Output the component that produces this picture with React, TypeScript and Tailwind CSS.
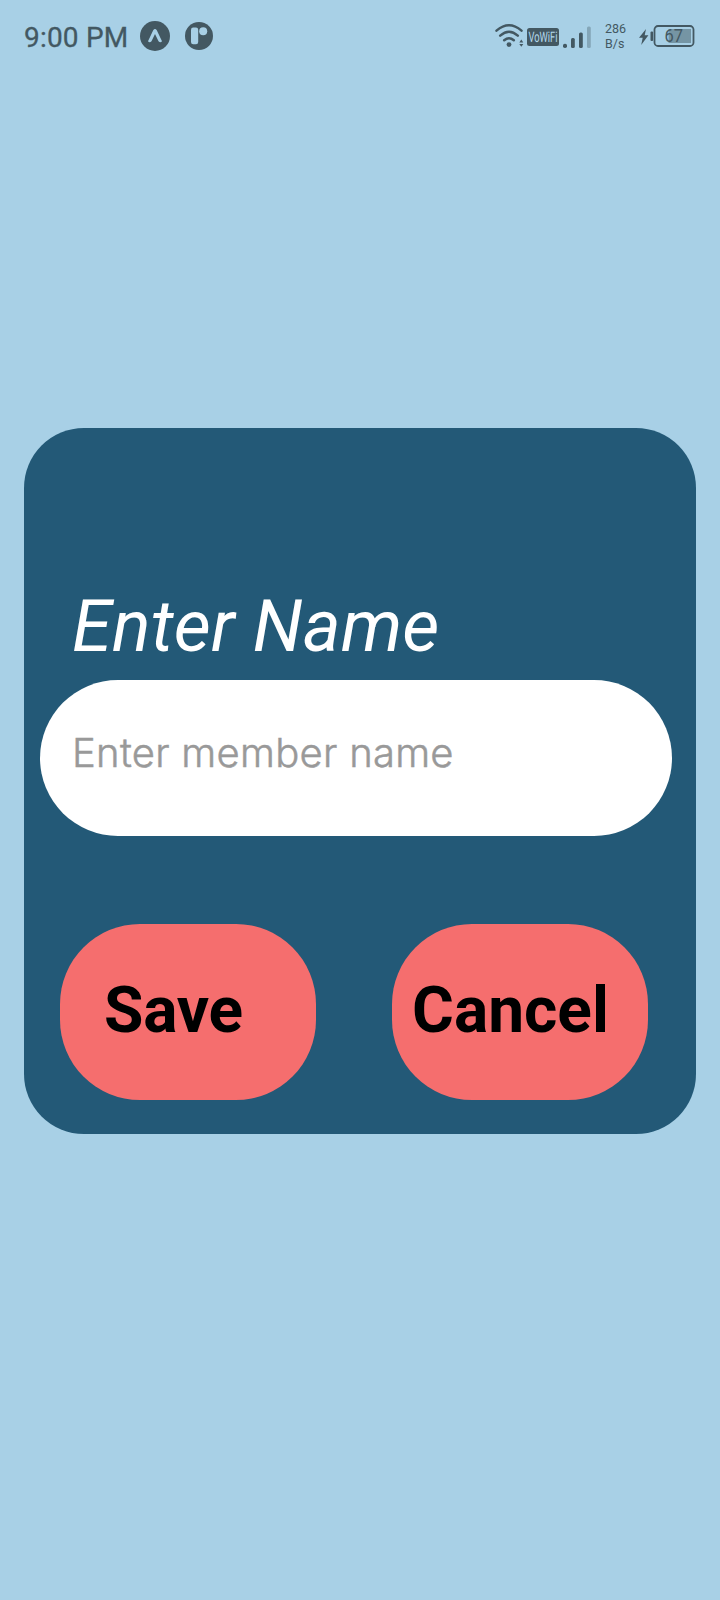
import React from "react";

function ExpoIcon() {
  return (
    <svg className="h-[30px] w-[30px]" viewBox="0 0 30 30">
      <circle cx="15" cy="15" r="15" fill="#435862" />
      <path d="M8 20.200 13.200 9.200q1.800-2.400 3.600 0L22 20.200q-1.600 2.200-3.500 0L15 13l-3.500 7.200q-1.900 2.200-3.500 0Z" fill="#a8d0e6" />
    </svg>
  );
}

function RoundBadgeIcon() {
  return (
    <svg className="h-7 w-7" viewBox="0 0 28 28">
      <circle cx="14" cy="14" r="14" fill="#435862" />
      <rect x="6" y="5.500" width="7.200" height="16.700" rx="2.200" fill="#a8d0e6" />
      <circle cx="18.200" cy="9.300" r="4" fill="#a8d0e6" />
    </svg>
  );
}

function WifiIcon() {
  return (
    <svg className="h-6 w-[29px]" viewBox="0 0 29 24" fill="none" stroke="#435862" strokeWidth="2.5" strokeLinecap="round">
      <path d="M1.500 6.600Q14-4 26.500 6.600M5.200 11.600q8.800-7.800 17.600 0M9.200 16.200q4.800-4 9.600 0" />
      <circle cx="14" cy="20.600" r="2.400" fill="#435862" stroke="none" />
      <path d="M24.300 18.500h4L26.300 15.500ZM24.300 20h4l-2 2.800Z" fill="#435862" stroke="none" />
    </svg>
  );
}

function VoWifiBadge() {
  return (
    <svg className="h-[18px] w-8 overflow-visible" viewBox="0 0 32 18">
      <rect width="32" height="18" rx="2.500" fill="#435862" />
      <text x="1.500" y="14.200" fontFamily="Roboto, sans-serif" fontSize="14.500" fill="#b4d9ec" textLength="29" lengthAdjust="spacingAndGlyphs" textRendering="geometricPrecision">VoWiFi</text>
    </svg>
  );
}

function SignalIcon() {
  return (
    <svg className="h-[23px] w-7" viewBox="0 0 28 23" fill="#435862">
      <rect x="0" y="18.700" width="4" height="4.300" rx="1.800" />
      <rect x="8" y="13" width="3.800" height="10" rx="1.500" />
      <rect x="16" y="7.500" width="3.800" height="15.500" rx="1.500" />
      <rect x="24" y="1.500" width="3.800" height="21.500" rx="1.500" opacity=".35" />
    </svg>
  );
}

function BatteryIcon() {
  return (
    <svg className="h-6 w-[56px]" viewBox="0 0 56 24">
      <path d="M7 5 0 13.700h3.700L2.200 21 9.400 11.300H5.700Z" fill="#435862" />
      <rect x="11.500" y="7.500" width="2.600" height="9.500" rx="1" fill="#435862" />
      <rect x="15.500" y="2" width="39" height="20" rx="3.500" fill="none" stroke="#435862" strokeWidth="1.800" />
      <rect x="29.500" y="5" width="22.500" height="14" fill="#7595a4" />
      <text x="25.500" y="18.300" fontFamily="Roboto, sans-serif" fontSize="17.500" fill="#435862" textLength="18.500" lengthAdjust="spacingAndGlyphs">67</text>
    </svg>
  );
}

export default function App() {
  return (
    <div className="flex h-[1600px] w-[720px] flex-col overflow-hidden bg-[#a8d0e6] font-['Roboto',sans-serif]">
      <header className="flex h-[72px] shrink-0 items-center pl-6 pr-[25px] text-[#435862]">
        <span className="w-[116px] whitespace-nowrap pt-1 text-[28px]/[32px] tracking-[0.2px] [-webkit-text-stroke:0.3px_#435862]">9:00 PM</span>
        <ExpoIcon />
        <span className="ml-[15px]"><RoundBadgeIcon /></span>
        <div className="ml-auto flex items-center">
          <WifiIcon />
          <span className="ml-[3px] pt-0.5"><VoWifiBadge /></span>
          <span className="ml-1"><SignalIcon /></span>
          <span className="ml-3.5 w-[34px] text-[12.5px]/[15px]">286<br />B/s</span>
          <BatteryIcon />
        </div>
      </header>

      <main className="mx-6 mt-[356px] h-[706px] shrink-0 rounded-[60px] bg-[#235977] pl-4 pr-6 pt-[157px]">
        <label htmlFor="member" className="block pl-8 text-[72px]/[84px] italic tracking-[0.2px] text-white">Enter Name</label>
        <input
          id="member"
          placeholder="Enter member name"
          className="mt-[11px] block h-[156px] w-full rounded-[80px] bg-white pb-[60px] pl-8 pt-12 font-['Inter',sans-serif] text-[40px]/[48px] font-light tracking-[0.27px] text-black outline-none placeholder:text-[#999999] placeholder:opacity-100 placeholder:[-webkit-text-stroke:0.5px_#999999]"
        />
        <div className="mt-[88px] flex justify-between pl-5 pr-6">
          <button className="flex h-44 w-64 items-start rounded-[80px] bg-[#f56e6e] pl-11 pt-[49px] text-[64px]/[75px] font-bold tracking-[-0.2px] text-black">Save</button>
          <button className="flex h-44 w-64 items-start rounded-[80px] bg-[#f56e6e] pl-5 pt-[49px] text-[64px]/[75px] font-bold text-black">Cancel</button>
        </div>
      </main>
    </div>
  );
}
